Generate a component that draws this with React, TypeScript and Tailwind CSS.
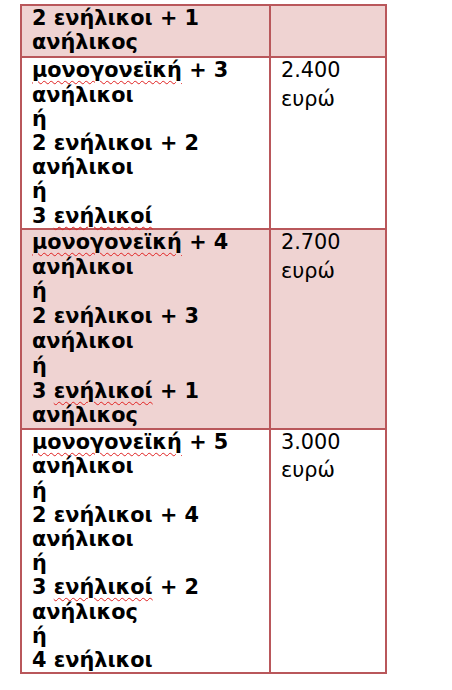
const rows: {
  left: (string | { w: string; rest: string })[];
  right?: string[];
  shaded: boolean;
  cls: string;
}[] = [
  { left: ["2 ενήλικοι + 1", "ανήλικος"], shaded: true, cls: "pb-[2px] leading-[24.2px]" },
  {
    left: [{ w: "μονογονεϊκή", rest: " + 3" }, "ανήλικοι", "ή", "2 ενήλικοι + 2", "ανήλικοι", "ή", { w: "3 ενήλικοί", rest: "" }],
    right: ["2.400", "ευρώ"],
    shaded: false,
    cls: "leading-[24.2px]",
  },
  {
    left: [{ w: "μονογονεϊκή", rest: " + 4" }, "ανήλικοι", "ή", "2 ενήλικοι + 3", "ανήλικοι", "ή", { w: "3 ενήλικοί", rest: " + 1" }, "ανήλικος"],
    right: ["2.700", "ευρώ"],
    shaded: true,
    cls: "leading-[24.8px]",
  },
  {
    left: [
      { w: "μονογονεϊκή", rest: " + 5" },
      "ανήλικοι",
      "ή",
      "2 ενήλικοι + 4",
      "ανήλικοι",
      "ή",
      { w: "3 ενήλικοί", rest: " + 2" },
      "ανήλικος",
      "ή",
      "4 ενήλικοι",
    ],
    right: ["3.000", "ευρώ"],
    shaded: false,
    cls: "leading-[24.2px]",
  },
];

function Line({ item }: { item: string | { w: string; rest: string } }) {
  if (typeof item === "string") return <div>{item}</div>;
  const m = item.w.match(/^(\d )?(.*)$/);
  const lead = m?.[1] ?? "";
  const word = m?.[2] ?? item.w;
  return (
    <div>
      {lead}
      <span className="underline decoration-wavy decoration-[#e02020] decoration-1 underline-offset-[3px]">{word}</span>
      {item.rest}
    </div>
  );
}

export default function App() {
  return (
    <div className="min-h-[690px] bg-white pt-[4px] pl-[20px]" style={{ fontFamily: '"DejaVu Sans", sans-serif' }}>
      <table className="border-collapse text-[20.8px] text-black">
        <tbody>
          {rows.map((r, i) => (
            <tr key={i} className={r.shaded ? "bg-[#efd3d2]" : "bg-white"}>
              <td className={`w-[249px] border-2 border-[#b9575b] pl-[10px] pr-[4px] align-top font-bold ${r.cls}`}>
                {r.left.map((l, j) => (
                  <Line key={j} item={l} />
                ))}
              </td>
              <td className={`w-[116px] border-2 border-[#b9575b] pl-[10px] pr-[4px] align-top ${r.cls}`}>
                {r.right?.map((t, j) => (
                  <div key={j} className={j === 1 ? "pt-[4px]" : ""}>
                    {t}
                  </div>
                ))}
              </td>
            </tr>
          ))}
        </tbody>
      </table>
    </div>
  );
}
